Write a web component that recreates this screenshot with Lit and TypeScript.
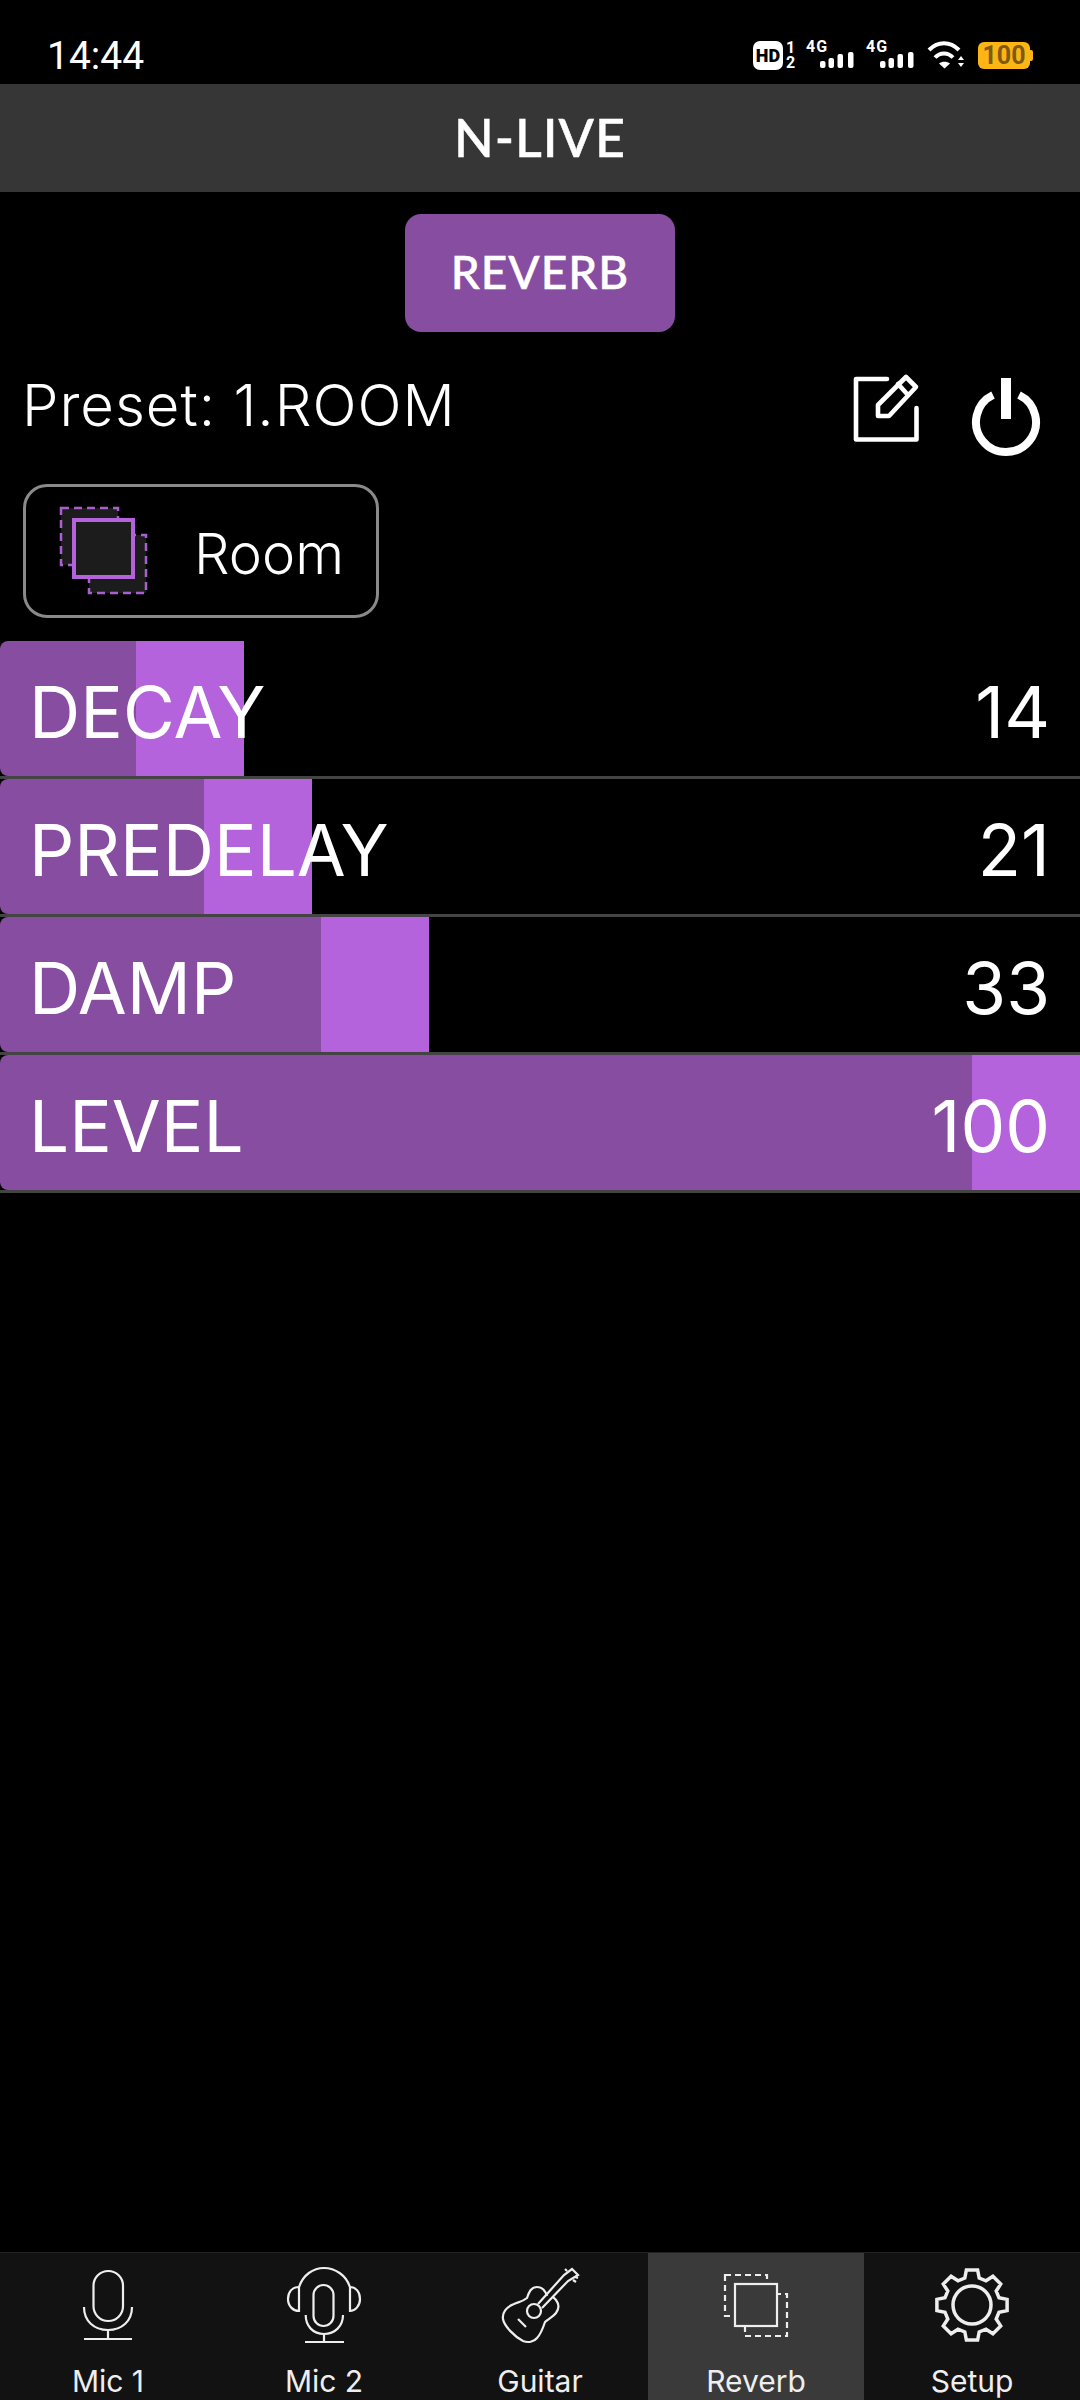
import { LitElement, css, html, svg } from "lit";
import { customElement, state } from "lit/decorators.js";

interface Param {
  name: string;
  value: number;
}

const THUMB = 108;
const TRACK = 1080;

// eight-tooth gear outline around the (50, 44) centre of a nav icon
function gearPath(): string {
  const pt = (deg: number, r: number) => {
    const a = (deg * Math.PI) / 180;
    return `${(50 + r * Math.cos(a)).toFixed(1)} ${(44 + r * Math.sin(a)).toFixed(1)}`;
  };
  let d = "";
  for (let i = 0; i < 8; i++) {
    const a = i * 45;
    d += `${i ? "L" : "M"}${pt(a - 15, 28)} L${pt(a - 9, 35.5)} L${pt(a + 9, 35.5)} L${pt(a + 15, 28)} `;
  }
  return d + "Z";
}

const micIcon = svg`
  <rect x="35.5" y="10" width="29.5" height="50" rx="14.75" />
  <path d="M26 46C26 60 36 69 50 69S74 60 74 46M50 69V78M26 78H74" />`;

const headsetIcon = svg`
  <rect x="39.5" y="24" width="20" height="41" rx="10" />
  <path d="M31.7 54C31.7 65 39 73 50 73S69 65 69 54M50 73V81M31 81H70" />
  <path d="M25 26C29 14 39 7 50 7S72 14 76 26" />
  <path d="M25 26C18 26 14 31 14 38C14 45 19 50 25 50ZM76 26C82 26 86 31 86 38C86 45 81 50 76 50Z" />`;

const guitarIcon = svg`
  <path d="M57 35C55 29 51 26 47 26C41 26 39 31 37 37C32 41 28 41 24 43C16 46 12 52 13 58C14 65 25 76 33 80C38 82 44 81 47 77C51 73 53 67 55 61C58 58 63 56 66 52C69 48 69 43 66 39L63 36" />
  <circle cx="44" cy="50" r="7" />
  <path d="M48 43L74 14L82 8L88 14L78 20L52 47M28 58L36 66M75 8L77 10M83 19L86 21M85 16L88 17" />`;

const stackIcon = svg`
  <rect x="19" y="14" width="42" height="41" stroke-dasharray="6 4" />
  <rect x="39" y="33" width="42" height="42" stroke-dasharray="6 4" />
  <rect class="front" x="29" y="23" width="42" height="42" />`;

const gearIcon = svg`
  <path d=${gearPath()} stroke-width="3.5" />
  <circle cx="50" cy="44" r="19" stroke-width="3.5" />`;

@customElement("app-root")
export class AppRoot extends LitElement {
  @state() private params: Param[] = [
    { name: "DECAY", value: 14 },
    { name: "PREDELAY", value: 21 },
    { name: "DAMP", value: 33 },
    { name: "LEVEL", value: 100 },
  ];

  @state() private tabs = [
    { label: "Mic 1", icon: micIcon },
    { label: "Mic 2", icon: headsetIcon },
    { label: "Guitar", icon: guitarIcon },
    { label: "Reverb", icon: stackIcon, active: true },
    { label: "Setup", icon: gearIcon },
  ];

  static styles = css`
    :host {
      display: flex;
      flex-direction: column;
      width: 1080px;
      height: 2400px;
      overflow: hidden;
      background: #000;
      color: #fff;
      font-family: Inter, "Liberation Sans", sans-serif;
    }
    .status {
      display: flex;
      align-items: center;
      justify-content: space-between;
      box-sizing: border-box;
      height: 84px;
      padding: 28px 47px 0;
    }
    .time {
      font: 400 39px Roboto, sans-serif;
    }
    .tray {
      display: flex;
      align-items: center;
      gap: 10px;
      margin-top: -2px;
    }
    .hd {
      display: flex;
      align-items: center;
      gap: 2px;
    }
    .hd-badge {
      width: 30px;
      height: 29px;
      border-radius: 7px;
      background: #fff;
      color: #000;
      font: 900 18px/29px Roboto, sans-serif;
      text-align: center;
    }
    .sims {
      display: flex;
      flex-direction: column;
      width: 11px;
      font: 700 16px/15px Roboto, sans-serif;
      text-align: center;
    }
    .sim {
      display: flex;
      flex-direction: column;
      width: 50px;
      height: 30px;
    }
    .sim span {
      width: 25px;
      font: 700 16px/13px Roboto, sans-serif;
      letter-spacing: 1px;
    }
    .sim svg {
      margin-top: -1px;
      fill: #fff;
    }
    .battery {
      position: relative;
      width: 52px;
      height: 27px;
      margin: 0 3px 0 4px;
      border-radius: 6px;
      background: #fdb515;
      color: #7c5a12;
      font: 700 25px/27px Roboto, sans-serif;
      text-align: center;
    }
    .battery::after {
      content: "";
      position: absolute;
      right: -3px;
      top: 8px;
      width: 3px;
      height: 11px;
      border-radius: 0 2px 2px 0;
      background: #fdb515;
    }
    .title {
      height: 106px;
      padding-bottom: 2px;
      background: #363636;
      font: 500 52px/106px Lato, sans-serif;
      text-align: center;
      letter-spacing: 1px;
      -webkit-text-stroke: 0.5px #fff;
    }
    .tag {
      align-self: center;
      width: 270px;
      height: 118px;
      margin-top: 22px;
      border-radius: 16px;
      background: #864da0;
      font: 500 46px/116px Lato, sans-serif;
      text-align: center;
      letter-spacing: 1px;
      -webkit-text-stroke: 0.5px #fff;
    }
    .preset {
      display: flex;
      align-items: center;
      height: 90px;
      margin-top: 38px;
      padding: 0 34px 0 22px;
      gap: 38px;
    }
    .preset-name {
      flex: 1;
      padding-bottom: 20px;
      font-size: 58px;
      font-weight: 350;
      letter-spacing: 1px;
    }
    .preset svg {
      fill: none;
      stroke: #fff;
      stroke-width: 4.6;
      stroke-linejoin: round;
      stroke-linecap: round;
    }
    .room {
      display: flex;
      align-items: center;
      box-sizing: border-box;
      width: 356px;
      height: 134px;
      margin: 24px 0 23px 23px;
      padding-left: 32px;
      gap: 44px;
      border: 3px solid #8a8a8a;
      border-radius: 24px;
      font-size: 56px;
      font-weight: 350;
    }
    .room span {
      padding-top: 6px;
    }
    .room svg {
      fill: #1c1c1c;
      stroke: #a95fcf;
      stroke-width: 2.5;
    }
    .room .front {
      stroke: #b463dc;
      stroke-width: 4;
    }
    .row {
      position: relative;
      display: flex;
      align-items: center;
      justify-content: space-between;
      box-sizing: content-box;
      height: 129px;
      padding: 6px 30px 0 29px;
      border-bottom: 3px solid #444;
      font-size: 71px;
      font-weight: 400;
    }
    .fill {
      position: absolute;
      left: 0;
      top: 0;
      bottom: 0;
      display: flex;
      justify-content: flex-end;
      border-radius: 8px 0 0 8px;
      background: #864da0;
    }
    .thumb {
      width: 108px;
      background: #b463dc;
    }
    .row span {
      position: relative;
    }
    .nav {
      display: flex;
      height: 147px;
      margin-top: auto;
      background: #121212;
      border-top: 1px solid #222;
    }
    .tab {
      flex: 1;
      display: flex;
      flex-direction: column;
      align-items: center;
      padding-top: 8px;
      font-size: 30px;
      line-height: 36px;
      color: #eee;
    }
    .tab.active {
      background: #3a3a3a;
    }
    .tab svg {
      margin-bottom: 12px;
      fill: none;
      stroke: #eee;
      stroke-width: 2.2;
    }
    .tab .front {
      fill: #3a3a3a;
    }
  `;

  private fourG() {
    return html`<div class="sim">
      <span>4G</span>
      <svg width="50" height="18" viewBox="0 12 50 18">
        <rect x="14" y="21" width="5.5" height="7" rx="2" />
        <rect x="22.5" y="18" width="5.5" height="10" rx="2" />
        <rect x="31.5" y="14" width="5.5" height="14" rx="2" />
        <rect x="42" y="12" width="5.5" height="16" rx="2" />
      </svg>
    </div>`;
  }

  private renderStatus() {
    return html`<div class="status">
      <div class="time">14:44</div>
      <div class="tray">
        <div class="hd">
          <div class="hd-badge">HD</div>
          <div class="sims"><span>1</span><span>2</span></div>
        </div>
        ${this.fourG()} ${this.fourG()}
        <svg width="38" height="30" viewBox="0 0 38 30" fill="none" stroke="#fff" stroke-width="4">
          <path d="M3 10C12 1 24 1 33 10M9 17.500C14 12 22 12 27 17.500" />
          <path d="M13 23.500L18.500 28.500L24 23.500C21 21 16 21 13 23.500Z" fill="#fff" stroke="none" />
          <path d="M32 20L35 16L38 20ZM32 23L35 27L38 23Z" fill="#fff" stroke="none" />
        </svg>
        <div class="battery">100</div>
      </div>
    </div>`;
  }

  private renderPreset() {
    return html`<div class="preset">
      <div class="preset-name">Preset: 1.ROOM</div>
      <svg width="80" height="90" viewBox="0 0 80 90">
        <path d="M39 9H8V69.500H68.500V38" />
        <path d="M30 46V35L58 7L68 17L41 46ZM50 14L60 25" />
      </svg>
      <svg width="80" height="90" viewBox="0 0 80 90">
        <path d="M27 25A30 30 0 1 0 53 25" stroke-width="8" stroke-linecap="butt" />
        <rect x="35" y="8" width="10" height="41" fill="#fff" stroke="none" />
      </svg>
    </div>`;
  }

  private renderRow(p: Param) {
    const width = THUMB + ((TRACK - THUMB) * p.value) / 100;
    return html`<div class="row">
      <div class="fill" style="width: ${width}px"><div class="thumb"></div></div>
      <span>${p.name}</span>
      <span>${p.value}</span>
    </div>`;
  }

  protected render() {
    return html`
      ${this.renderStatus()}
      <div class="title">N-LIVE</div>
      <div class="tag">REVERB</div>
      ${this.renderPreset()}
      <div class="room">
        <svg width="92" height="90" viewBox="0 0 92 90">
          <rect x="3" y="2" width="57" height="57" stroke-dasharray="8 5" />
          <rect x="31" y="29" width="57" height="58" stroke-dasharray="8 5" />
          <rect class="front" x="16" y="14" width="59" height="57" />
        </svg>
        <span>Room</span>
      </div>
      ${this.params.map((p) => this.renderRow(p))}
      <div class="nav">
        ${this.tabs.map(
          (t) => html`<div class="tab ${t.active ? "active" : ""}">
            <svg width="100" height="90" viewBox="0 0 100 90">${t.icon}</svg>
            ${t.label}
          </div>`
        )}
      </div>
    `;
  }
}
